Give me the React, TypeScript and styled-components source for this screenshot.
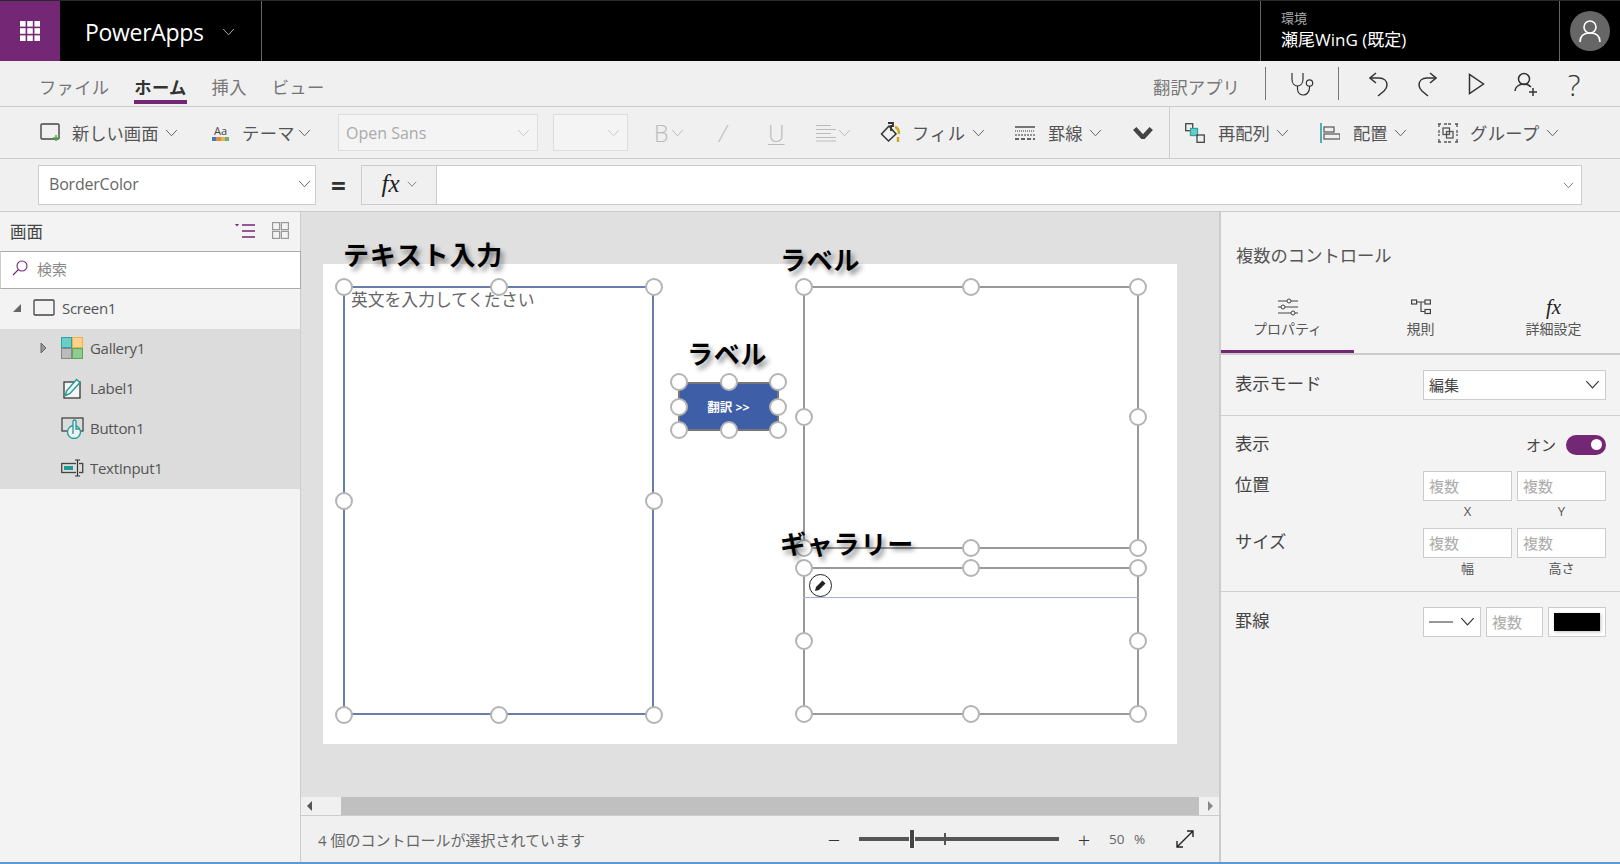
import React from 'react'
import styled, { createGlobalStyle } from 'styled-components'

const FONT = `"Open Sans", "Noto Sans CJK JP", sans-serif`
const PURPLE = '#742774'

const GlobalStyle = createGlobalStyle`
   html, body {
      margin: 0;
      padding: 0;
      background: #f0f0f0;
   }
   * {
      box-sizing: border-box;
   }
`

const Page = styled.div`
   width: 1620px;
   height: 864px;
   display: flex;
   flex-direction: column;
   overflow: hidden;
   font-family: ${FONT};
   color: #444;
   background: #f0f0f0;
   border-bottom: 2px solid #5b9bd5;
`

/* ---- top bar ---- */
const TopBar = styled.header`
   height: 61px;
   flex: none;
   display: flex;
   align-items: stretch;
   background: #000;
   border-top: 1px solid #2a2a2a;
   color: #fff;
`
const Waffle = styled.div`
   width: 60px;
   background: ${PURPLE};
   display: flex;
   align-items: center;
   justify-content: center;
`
const Brand = styled.div`
   width: 202px;
   display: flex;
   align-items: center;
   gap: 18px;
   padding: 2px 0 0 25px;
   font-size: 23px;
   letter-spacing: -0.3px;
   border-right: 1px solid #666;
`
const Spacer = styled.div`
   flex: 1;
`
const EnvBox = styled.div`
   width: 300px;
   flex: none;
   padding: 8px 0 0 20px;
   border-left: 1px solid #666;
   border-right: 1px solid #666;
   display: flex;
   flex-direction: column;
`
const EnvLabel = styled.span`
   font-size: 13px;
   line-height: 18px;
   color: #aaa;
`
const EnvName = styled.span`
   font-size: 17px;
   line-height: 26px;
`
const AvatarBox = styled.div`
   width: 60px;
   flex: none;
   display: flex;
   align-items: center;
   justify-content: center;
`
const Avatar = styled.div`
   width: 40px;
   height: 40px;
   border-radius: 50%;
   background: #666;
   display: flex;
   align-items: center;
   justify-content: center;
`

/* ---- menu ---- */
const MenuBar = styled.nav`
   height: 46px;
   flex: none;
   display: flex;
   align-items: flex-start;
   padding: 0 0 0 39px;
   border-bottom: 1px solid #ccc;
`
const MenuTab = styled.span<{ $active?: boolean }>`
   margin-right: 25px;
   height: 43px;
   padding-top: 14px;
   font-size: 17.3px;
   line-height: 26px;
   letter-spacing: 0.3px;
   color: ${(p) => (p.$active ? '#333' : '#777')};
   font-weight: ${(p) => (p.$active ? 700 : 400)};
   border-bottom: ${(p) => (p.$active ? `4px solid ${PURPLE}` : 'none')};
`
const MenuTools = styled.div`
   margin-left: auto;
   height: 46px;
   display: flex;
   align-items: center;
   padding-right: 22px;
`
const AppName = styled.span`
   font-size: 17.3px;
   letter-spacing: 0.1px;
   color: #777;
   margin-right: 25px;
   padding-top: 5px;
`
const ToolDivider = styled.span`
   width: 1px;
   height: 33px;
   background: #777;
   margin-top: -1px;
`
const ToolSlot = styled.span<{ $w: number }>`
   width: ${(p) => p.$w}px;
   display: flex;
   align-items: center;
   justify-content: center;
   font-size: 30px;
   font-weight: 300;
   line-height: 33px;
   color: #333;
`

/* ---- ribbon ---- */
const Ribbon = styled.div`
   height: 52px;
   flex: none;
   display: flex;
   align-items: center;
   padding-left: 40px;
   border-bottom: 1px solid #ccc;
`
const RibbonItem = styled.div<{ $w: number; $gap?: number; $pl?: number }>`
   width: ${(p) => p.$w}px;
   flex: none;
   display: flex;
   align-items: center;
   gap: ${(p) => p.$gap ?? 12}px;
   padding-left: ${(p) => p.$pl ?? 0}px;
   font-size: 17.3px;
   color: #555;
`
const ItemText = styled.span<{ $mr?: number; $ls?: number }>`
   margin-right: ${(p) => p.$mr ?? -7}px;
   letter-spacing: ${(p) => p.$ls ?? 0}px;
   white-space: nowrap;
`
const ThemeIcon = styled.span`
   width: 17px;
   flex: none;
   display: flex;
   flex-direction: column;
   align-items: center;
   font-size: 11px;
   line-height: 12px;
   color: #444;
`
const ThemeSwatches = styled.span`
   width: 17px;
   height: 4px;
   background: linear-gradient(90deg, #3b7dc4 25%, #e8883a 25% 50%, #e2b84c 50% 75%, #6fb07a 75%);
`
const RibbonSelect = styled.div<{ $w: number; $ml: number }>`
   width: ${(p) => p.$w}px;
   height: 37px;
   flex: none;
   margin-left: ${(p) => p.$ml}px;
   display: flex;
   align-items: center;
   justify-content: space-between;
   padding: 0 7px;
   border: 1px solid #ddd;
   background: #f4f4f4;
   color: #aaa;
   font-size: 16px;
`
const RibbonDivider = styled.span`
   width: 1px;
   height: 51px;
   margin-top: -1px;
   background: #ccc;
   flex: none;
`
const GhostLetter = styled.span<{ $italic?: boolean; $underline?: boolean }>`
   font-size: 23px;
   line-height: 26px;
   color: #bbb;
   font-weight: 300;
   font-style: ${(p) => (p.$italic ? 'italic' : 'normal')};
   text-decoration: ${(p) => (p.$underline ? 'underline' : 'none')};
   text-underline-offset: 2px;
   text-decoration-thickness: 1px;
`

/* ---- formula bar ---- */
const FormulaBar = styled.div`
   height: 53px;
   flex: none;
   display: flex;
   align-items: flex-start;
   padding: 6px 38px 0 38px;
   border-bottom: 1px solid #ccc;
`
const PropSelect = styled.div`
   width: 278px;
   height: 40px;
   display: flex;
   align-items: center;
   justify-content: space-between;
   padding: 0 4px 2px 10px;
   background: #fff;
   border: 1px solid #ccc;
   font-size: 16px;
   letter-spacing: -0.2px;
   color: #666;
`
const EqualSign = styled.span`
   width: 45px;
   text-align: center;
   font-size: 26px;
   line-height: 42px;
   font-weight: 700;
   color: #333;
`
const FxBox = styled.div`
   width: 76px;
   height: 40px;
   display: flex;
   align-items: center;
   justify-content: center;
   gap: 7px;
   padding-bottom: 3px;
   border: 1px solid #ccc;
   background: #f0f0f0;
`
const FxGlyph = styled.span<{ $size?: number }>`
   font-family: "Liberation Serif", serif;
   font-style: italic;
   font-size: ${(p) => p.$size ?? 25}px;
   line-height: 1;
   color: #222;
`
const FormulaInput = styled.div`
   flex: 1;
   height: 40px;
   display: flex;
   align-items: center;
   justify-content: flex-end;
   padding-right: 7px;
   background: #fff;
   border: 1px solid #ccc;
   border-left: none;
`

/* ---- main area ---- */
const Main = styled.div`
   flex: 1;
   min-height: 0;
   display: flex;
`
const LeftPanel = styled.aside`
   width: 301px;
   flex: none;
   background: #f3f3f3;
   border-right: 1px solid #ccc;
`
const PanelHead = styled.div`
   height: 39px;
   display: flex;
   align-items: center;
   padding: 0 11px 2px 10px;
   font-size: 16.5px;
   color: #444;
`
const HeadIcons = styled.div`
   margin-left: auto;
   display: flex;
   align-items: center;
   gap: 17px;
`
const SearchBox = styled.div`
   height: 38px;
   margin-right: -1px;
   display: flex;
   align-items: center;
   gap: 9px;
   padding: 0 0 4px 11px;
   background: #fff;
   border: 1px solid #aaa;
   border-left-color: #ccc;
   font-size: 15px;
   color: #888;
   position: relative;
`
const TreeRow = styled.div<{ $selected?: boolean; $indent: number }>`
   height: 40px;
   display: flex;
   align-items: center;
   padding: 0 0 2px ${(p) => p.$indent}px;
   background: ${(p) => (p.$selected ? '#dcdcdc' : 'transparent')};
   font-size: 15px;
   letter-spacing: -0.3px;
   color: #555;
`
const TreeCaret = styled.span`
   width: 21px;
   flex: none;
   display: flex;
`
const TreeIcon = styled.span`
   width: 29px;
   flex: none;
   display: flex;
`

const CanvasColumn = styled.div`
   flex: 1;
   min-width: 0;
   display: flex;
   flex-direction: column;
`
const CanvasArea = styled.div`
   flex: 1;
   min-height: 0;
   background: #e0e0e0;
   padding: 52px 0 0 22px;
`
const Artboard = styled.div`
   position: relative;
   width: 854px;
   height: 480px;
   background: #fff;
`
const ScrollBar = styled.div`
   height: 19px;
   flex: none;
   display: flex;
   align-items: center;
   padding: 0 6px;
   background: #f0f0f0;
   border-bottom: 1px solid #ccc;
`
const ScrollThumb = styled.div`
   width: 858px;
   height: 18px;
   margin: 0 auto 0 29px;
   background: #c0c0c0;
`
const StatusBar = styled.div`
   height: 46px;
   flex: none;
   display: flex;
   align-items: center;
   padding: 0 22px 0 17px;
   font-size: 15px;
   color: #666;
`
const StatusText = styled.span`
   width: 504px;
   flex: none;
`
const ZoomSign = styled.span<{ $side: 'left' | 'right' }>`
   width: 24px;
   flex: none;
   margin-${(p) => (p.$side === 'left' ? 'right' : 'left')}: 13px;
   text-align: center;
   font-size: 22px;
   font-weight: 300;
   line-height: 24px;
   color: #333;
`
const ZoomTrack = styled.div`
   position: relative;
   width: 200px;
   height: 4px;
   flex: none;
   background: #555;
`
const ZoomThumb = styled.span`
   position: absolute;
   left: 50px;
   top: -7px;
   width: 4px;
   height: 18px;
   background: #444;
   border: 1px solid #fff;
   border-width: 0 1px;
   box-sizing: content-box;
`
const ZoomTick = styled.span`
   position: absolute;
   left: 85px;
   top: -4px;
   width: 2px;
   height: 12px;
   background: #555;
`
const ZoomValue = styled.span`
   margin-left: 13px;
   width: 66px;
   flex: none;
   word-spacing: 6px;
   font-size: 13.5px;
`

/* ---- free canvas items ---- */
const Frame = styled.div<{ $x: number; $y: number; $w: number; $h: number; $color: string }>`
   position: absolute;
   left: ${(p) => p.$x - 323}px;
   top: ${(p) => p.$y - 264}px;
   width: ${(p) => p.$w}px;
   height: ${(p) => p.$h}px;
   border: 2px solid ${(p) => p.$color};
`
const Handle = styled.span<{ $x: number; $y: number }>`
   position: absolute;
   left: ${(p) => p.$x - 323 - 9}px;
   top: ${(p) => p.$y - 264 - 9}px;
   width: 18px;
   height: 18px;
   border-radius: 50%;
   background: #fff;
   border: 2px solid #b4b4b4;
   z-index: 2;
`
const Placeholder = styled.span`
   position: absolute;
   left: 6px;
   top: 1px;
   font-size: 16.8px;
   line-height: 22px;
   color: #666;
`
const ActionButton = styled.div`
   position: absolute;
   inset: 0;
   display: flex;
   align-items: center;
   justify-content: center;
   padding-bottom: 1px;
   background: #3f5ea8;
   color: #fff;
   font-size: 12.5px;
   font-weight: 700;
`
const Callout = styled.span<{ $x: number; $y: number }>`
   position: absolute;
   left: ${(p) => p.$x - 323}px;
   top: ${(p) => p.$y - 264}px;
   font-size: 26px;
   line-height: 32px;
   font-weight: 700;
   color: #000;
   letter-spacing: 0.8px;
   white-space: nowrap;
   text-shadow: 3px 4px 5px rgba(0, 0, 0, 0.45);
   z-index: 3;
`
const TemplateLine = styled.div`
   position: absolute;
   left: ${803 - 323}px;
   top: ${597 - 264}px;
   width: 336px;
   height: 1px;
   background: #a4b1d2;
`
const EditBadge = styled.span`
   position: absolute;
   left: ${809 - 323}px;
   top: ${574 - 264}px;
   width: 23px;
   height: 23px;
   border-radius: 50%;
   border: 1.5px solid #222;
   background: #fff;
   display: flex;
   align-items: center;
   justify-content: center;
   z-index: 2;
`

/* ---- right panel ---- */
const RightPanel = styled.aside`
   width: 401px;
   flex: none;
   background: #f3f3f3;
   border-left: 2px solid #ccc;
`
const RightTitle = styled.div`
   height: 70px;
   padding: 31px 0 0 15px;
   font-size: 17.3px;
   line-height: 26px;
   color: #555;
`
const TabStrip = styled.div`
   height: 73px;
   display: flex;
   border-bottom: 2px solid #ccc;
`
const PropTab = styled.div<{ $active?: boolean }>`
   width: 133px;
   height: 71px;
   padding-top: 14px;
   display: flex;
   flex-direction: column;
   align-items: center;
   gap: 1px;
   font-size: 14px;
   line-height: 20px;
   color: #555;
   border-bottom: ${(p) => (p.$active ? `3px solid ${PURPLE}` : 'none')};
`
const TabIcon = styled.span`
   height: 22px;
   display: flex;
   align-items: center;
`
const Section = styled.section<{ $h: number; $pt: number }>`
   height: ${(p) => p.$h}px;
   padding: ${(p) => p.$pt}px 14px 0 14px;
   border-bottom: 1px solid #d0d0d0;
   &:last-child {
      border-bottom: none;
   }
`
const PropRow = styled.div<{ $h?: number }>`
   height: ${(p) => (p.$h ? `${p.$h}px` : 'auto')};
   display: flex;
   align-items: flex-start;
   justify-content: space-between;
`
const PropLabel = styled.span`
   font-size: 17.3px;
   line-height: 28px;
   color: #444;
`
const Fields = styled.div`
   width: 183px;
   display: flex;
   gap: 5px;
`
const FieldBox = styled.div<{ $w?: number }>`
   width: ${(p) => (p.$w ? `${p.$w}px` : 'auto')};
   flex: ${(p) => (p.$w ? 'none' : '1')};
   height: 30px;
   display: flex;
   align-items: center;
   justify-content: space-between;
   padding: 0 5px 1px;
   background: #fff;
   border: 1px solid #ccc;
   font-size: 15px;
   color: #aaa;
`
const FieldValue = styled.span`
   color: #444;
`
const FieldCaption = styled.span`
   flex: 1;
   text-align: center;
   font-size: 13px;
   line-height: 21px;
   color: #555;
`
const ToggleWrap = styled.div`
   display: flex;
   align-items: center;
   gap: 10px;
   margin-top: 4px;
   font-size: 15px;
   color: #444;
`
const Toggle = styled.span`
   width: 40px;
   height: 20px;
   padding-right: 4px;
   border-radius: 10px;
   background: ${PURPLE};
   display: flex;
   align-items: center;
   justify-content: flex-end;
   &::after {
      content: '';
      width: 11px;
      height: 11px;
      border-radius: 50%;
      background: #fff;
   }
`
const Swatch = styled.span`
   flex: 1;
   height: 18px;
   background: #000;
   box-shadow: 1px 1px 3px rgba(0, 0, 0, 0.25);
`

/* ---- icons ---- */
const Chevron: React.FC<{ size?: number; color?: string; width?: number }> = ({
   size = 13,
   color = '#666',
   width = 1,
}) => (
   <svg width={size} height={size * 0.6} viewBox="0 0 13 8" fill="none">
      <path d="M1 1l5.500 6L12 1" stroke={color} strokeWidth={width} />
   </svg>
)

const WaffleIcon = () => (
   <svg width="20" height="20" viewBox="0 0 20 20" fill="#fff">
      {[0, 7.2, 14.4].map((y) =>
         [0, 7.2, 14.4].map((x) => <rect key={`${x}-${y}`} x={x} y={y} width="5.6" height="5.6" />),
      )}
   </svg>
)

const App: React.FC = () => {
   const textHandles = [
      [344, 287], [499, 287], [654, 287], [344, 501], [654, 501], [344, 715], [499, 715], [654, 715],
   ]
   const buttonHandles = [
      [679, 382], [729, 382], [778, 382], [679, 407], [778, 407], [679, 430], [729, 430], [778, 430],
   ]
   const labelHandles = [
      [804, 287], [971, 287], [1138, 287], [804, 417], [1138, 417], [804, 548], [971, 548], [1138, 548],
   ]
   const galleryHandles = [
      [804, 568], [971, 568], [1138, 568], [804, 641], [1138, 641], [804, 714], [971, 714], [1138, 714],
   ]
   return (
      <Page>
         <GlobalStyle />
         <TopBar>
            <Waffle>
               <WaffleIcon />
            </Waffle>
            <Brand>
               PowerApps
               <Chevron size={13} color="#aaa" />
            </Brand>
            <Spacer />
            <EnvBox>
               <EnvLabel>環境</EnvLabel>
               <EnvName>瀬尾WinG (既定)</EnvName>
            </EnvBox>
            <AvatarBox>
               <Avatar>
                  <svg width="24" height="24" viewBox="0 0 24 24" fill="none" stroke="#fff" strokeWidth="1.6">
                     <circle cx="12" cy="8" r="6" />
                     <path d="M2 23c0-6 4-9 10-9s10 3 10 9" />
                  </svg>
               </Avatar>
            </AvatarBox>
         </TopBar>

         <MenuBar>
            <MenuTab>ファイル</MenuTab>
            <MenuTab $active>ホーム</MenuTab>
            <MenuTab>挿入</MenuTab>
            <MenuTab>ビュー</MenuTab>
            <MenuTools>
               <AppName>翻訳アプリ</AppName>
               <ToolDivider />
               <ToolSlot $w={72}>
                  <svg width="23" height="24" viewBox="0 0 23 24" fill="none" stroke="#333" strokeWidth="1.2">
                     <path d="M1 1v6c0 5 3 7 5.500 7S12 12 12 7V1" />
                     <path d="M6.500 14v3c0 4 3 6 6 6s6-3 6-7v-2" />
                     <circle cx="18.500" cy="11" r="3.200" />
                  </svg>
               </ToolSlot>
               <ToolDivider />
               <ToolSlot $w={16} />
               <ToolSlot $w={48}>
                  <svg width="20" height="25" viewBox="0 0 20 25" fill="none" stroke="#333" strokeWidth="1.5">
                     <path d="M7 1L1 6l6 5" />
                     <path d="M1 6h9c5 0 8 3 8 7 0 2-1 4-3 6l-6 5" />
                  </svg>
               </ToolSlot>
               <ToolSlot $w={48}>
                  <svg width="20" height="25" viewBox="0 0 20 25" fill="none" stroke="#333" strokeWidth="1.5">
                     <path d="M13 1l6 5-6 5" />
                     <path d="M19 6h-9c-5 0-8 3-8 7 0 2 1 4 3 6l6 5" />
                  </svg>
               </ToolSlot>
               <ToolSlot $w={50}>
                  <svg width="17" height="22" viewBox="0 0 17 22" fill="none" stroke="#333" strokeWidth="1.5">
                     <path d="M1.500 1.500v19L15.500 11z" />
                  </svg>
               </ToolSlot>
               <ToolSlot $w={49}>
                  <svg width="24" height="25" viewBox="0 0 24 25" fill="none" stroke="#333" strokeWidth="1.5">
                     <circle cx="10" cy="7" r="5.500" />
                     <path d="M1 19c0-4 4-7 9-7 3 0 5 1 7 3" />
                     <path d="M19 16v8M15 20h8" />
                  </svg>
               </ToolSlot>
               <ToolSlot $w={48}>?</ToolSlot>
            </MenuTools>
         </MenuBar>

         <Ribbon>
            <RibbonItem $w={172}>
               <svg width="20" height="19" viewBox="0 0 20 19" fill="none">
                  <rect x="1" y="1" width="18" height="15" rx="1" stroke="#444" strokeWidth="1.4" />
                  <path d="M16 12v6M13 15h6" stroke="#4aa84a" strokeWidth="1.5" />
               </svg>
               <ItemText $mr={-5}>新しい画面</ItemText>
               <Chevron />
            </RibbonItem>
            <RibbonItem $w={126} $gap={13}>
               <ThemeIcon>
                  Aa
                  <ThemeSwatches />
               </ThemeIcon>
               <ItemText $mr={-10} $ls={0.4}>テーマ</ItemText>
               <Chevron />
            </RibbonItem>
            <RibbonSelect $w={200} $ml={0}>
               Open Sans
               <Chevron color="#ccc" />
            </RibbonSelect>
            <RibbonSelect $w={75} $ml={15}>
               <span />
               <Chevron color="#ccc" />
            </RibbonSelect>
            <RibbonItem $w={85} $pl={26} $gap={3}>
               <GhostLetter>B</GhostLetter>
               <Chevron color="#bbb" />
            </RibbonItem>
            <RibbonItem $w={55} $pl={6}>
               <GhostLetter $italic>/</GhostLetter>
            </RibbonItem>
            <RibbonItem $w={48}>
               <GhostLetter $underline>U</GhostLetter>
            </RibbonItem>
            <RibbonItem $w={64} $gap={2}>
               <svg width="20" height="18" viewBox="0 0 20 18" stroke="#bbb" strokeWidth="1">
                  <path d="M0 1.500h15M0 5.500h20M0 9.500h15M0 13.500h20M0 17h20" />
               </svg>
               <Chevron color="#bbb" />
            </RibbonItem>
            <RibbonItem $w={135} $gap={11}>
               <svg width="21" height="22" viewBox="0 0 21 22" fill="none">
                  <path d="M9 4L1.500 12l7 7L16 12z" stroke="#333" strokeWidth="1.500" />
                  <path d="M8 1h5v3l-2 0v5" stroke="#333" strokeWidth="1.800" />
                  <path d="M15 5c3 1 4 3 4 7M18 15v5" stroke="#d4a41c" strokeWidth="2.400" />
               </svg>
               <ItemText $mr={-5} $ls={0.8}>フィル</ItemText>
               <Chevron />
            </RibbonItem>
            <RibbonItem $w={110} $gap={13}>
               <svg width="20" height="14" viewBox="0 0 20 14" stroke="#333" strokeWidth="1" fill="none">
                  <path d="M0 1h20" strokeWidth="1.300" />
                  <path d="M0 5h20" strokeDasharray="1 1" />
                  <path d="M0 9h20" strokeDasharray="2 1" />
                  <path d="M0 13h20" strokeDasharray="4 2" strokeWidth="1.300" />
               </svg>
               <ItemText>罫線</ItemText>
               <Chevron />
            </RibbonItem>
            <RibbonItem $w={44} $pl={8}>
               <Chevron size={20} color="#444" width={3} />
            </RibbonItem>
            <RibbonDivider />
            <RibbonItem $w={150} $pl={15} $gap={13}>
               <svg width="20" height="20" viewBox="0 0 20 20" fill="none" stroke="#444" strokeWidth="1.300">
                  <rect x="0.700" y="0.700" width="7" height="7" />
                  <rect x="5.500" y="5.500" width="7" height="7" fill="#6ccdc8" stroke="#2aa5a0" />
                  <rect x="12" y="12" width="7.300" height="7.300" />
               </svg>
               <ItemText>再配列</ItemText>
               <Chevron />
            </RibbonItem>
            <RibbonItem $w={118} $gap={13}>
               <svg width="20" height="20" viewBox="0 0 20 20" fill="none" stroke="#555" strokeWidth="1.200">
                  <path d="M1 0v20" stroke="#1c9a96" strokeWidth="1.500" />
                  <rect x="4" y="4" width="10" height="5" />
                  <rect x="4" y="11" width="16" height="5" />
               </svg>
               <ItemText>配置</ItemText>
               <Chevron />
            </RibbonItem>
            <RibbonItem $w={130} $gap={12}>
               <svg width="20" height="20" viewBox="0 0 20 20" fill="none" stroke="#555" strokeWidth="1.300">
                  <path d="M0 1h3M0 19h3M17 1h3M17 19h3M1 1v3M1 16v3M19 1v3M19 16v3" />
                  <path d="M6 1h8M6 19h8M1 7v6M19 7v6" strokeDasharray="3 1" />
                  <rect x="5" y="5" width="6.500" height="6.500" />
                  <rect x="8.500" y="8.500" width="6.500" height="6.500" />
               </svg>
               <ItemText $mr={-6} $ls={0.4}>グループ</ItemText>
               <Chevron />
            </RibbonItem>
         </Ribbon>

         <FormulaBar>
            <PropSelect>
               BorderColor
               <Chevron />
            </PropSelect>
            <EqualSign>=</EqualSign>
            <FxBox>
               <FxGlyph>fx</FxGlyph>
               <Chevron size={10} />
            </FxBox>
            <FormulaInput>
               <Chevron size={11} />
            </FormulaInput>
         </FormulaBar>

         <Main>
            <LeftPanel>
               <PanelHead>
                  画面
                  <HeadIcons>
                     <svg width="20" height="16" viewBox="0 0 20 16" fill="none" stroke={PURPLE} strokeWidth="1.300">
                        <path d="M0 1h4l-2 2.500z" fill={PURPLE} stroke="none" />
                        <path d="M7 2h13M7 8h13M7 14h13" />
                     </svg>
                     <svg width="17" height="17" viewBox="0 0 17 17" fill="none" stroke="#999" strokeWidth="1.200">
                        <rect x="0.600" y="0.600" width="7" height="7" />
                        <rect x="9.400" y="0.600" width="7" height="7" />
                        <rect x="0.600" y="9.400" width="7" height="7" />
                        <rect x="9.400" y="9.400" width="7" height="7" />
                     </svg>
                  </HeadIcons>
               </PanelHead>
               <SearchBox>
                  <svg width="16" height="16" viewBox="0 0 16 16" fill="none" stroke={PURPLE} strokeWidth="1.100">
                     <circle cx="10" cy="6" r="5" />
                     <path d="M6.500 9.500L1 15" />
                  </svg>
                  検索
               </SearchBox>
               <TreeRow $indent={12}>
                  <TreeCaret>
                     <svg width="10" height="10" viewBox="0 0 10 10">
                        <path d="M9 1v8H1z" fill="#666" />
                     </svg>
                  </TreeCaret>
                  <TreeIcon>
                     <svg width="22" height="18" viewBox="0 0 22 18" fill="none">
                        <rect x="1" y="1" width="20" height="15" rx="1" stroke="#444" strokeWidth="1.300" />
                     </svg>
                  </TreeIcon>
                  Screen1
               </TreeRow>
               <TreeRow $selected $indent={40}>
                  <TreeCaret>
                     <svg width="7" height="12" viewBox="0 0 7 12" fill="#999" stroke="#666">
                        <path d="M1 1l5 5-5 5z" />
                     </svg>
                  </TreeCaret>
                  <TreeIcon>
                     <svg width="22" height="22" viewBox="0 0 22 22">
                        <rect x="0.500" y="0.500" width="10" height="10" fill="#6ccdc8" stroke="#2aa5a0" />
                        <rect x="11.500" y="0.500" width="10" height="10" fill="#fbd28a" stroke="#f2b04a" />
                        <rect x="0.500" y="11.500" width="10" height="10" fill="#bbb" stroke="#888" />
                        <rect x="11.500" y="11.500" width="10" height="10" fill="#8fcc8f" stroke="#5aa85a" />
                     </svg>
                  </TreeIcon>
                  Gallery1
               </TreeRow>
               <TreeRow $selected $indent={61}>
                  <TreeIcon>
                     <svg width="21" height="21" viewBox="0 0 21 21" fill="none">
                        <rect x="3" y="4" width="16" height="16" fill="#f4f4f4" stroke="#444" strokeWidth="1.400" />
                        <path d="M4.500 17.500l1-4.500L15.500 1.500l3.500 3L9 15.500z" fill="#f4f4f4" stroke="#1c9a96" strokeWidth="1.400" />
                     </svg>
                  </TreeIcon>
                  Label1
               </TreeRow>
               <TreeRow $selected $indent={61}>
                  <TreeIcon>
                     <svg width="24" height="22" viewBox="0 0 24 22" fill="none">
                        <rect x="1" y="1" width="21" height="13" stroke="#444" strokeWidth="1.300" />
                        <circle cx="13" cy="15" r="6.500" fill="#f0f0f0" stroke="#1c9a96" strokeWidth="1.300" />
                        <path d="M12 17V4.500a1.500 1.500 0 0 1 3 0V12h4" fill="#f0f0f0" stroke="#1c9a96" strokeWidth="1.300" />
                     </svg>
                  </TreeIcon>
                  Button1
               </TreeRow>
               <TreeRow $selected $indent={61}>
                  <TreeIcon>
                     <svg width="24" height="18" viewBox="0 0 24 18" fill="none">
                        <rect x="0.700" y="4.500" width="21" height="9" stroke="#444" strokeWidth="1.300" />
                        <rect x="3" y="7" width="9" height="4" fill="#1c9a96" />
                        <rect x="15" y="0" width="3" height="18" fill="#dcdcdc" />
                        <path d="M14 1h5M14 17h5M16.500 1v16" stroke="#333" strokeWidth="1.200" />
                     </svg>
                  </TreeIcon>
                  TextInput1
               </TreeRow>
            </LeftPanel>

            <CanvasColumn>
               <CanvasArea>
                  <Artboard>
                     <Frame $x={343} $y={286} $w={311} $h={429} $color="#6a7cab">
                        <Placeholder>英文を入力してください</Placeholder>
                     </Frame>
                     <Frame $x={678} $y={382} $w={101} $h={49} $color="#777">
                        <ActionButton>翻訳 &gt;&gt;</ActionButton>
                     </Frame>
                     <Frame $x={803} $y={286} $w={336} $h={263} $color="#999" />
                     <Frame $x={803} $y={567} $w={336} $h={148} $color="#999" />
                     <TemplateLine />
                     <EditBadge>
                        <svg width="13" height="13" viewBox="0 0 13 13">
                           <path d="M1 12l1-4 6.500-6.500 3 3L5 11z" fill="#222" />
                        </svg>
                     </EditBadge>
                     {textHandles.map(([x, y]) => (
                        <Handle key={`t${x}-${y}`} $x={x} $y={y} />
                     ))}
                     {buttonHandles.map(([x, y]) => (
                        <Handle key={`b${x}-${y}`} $x={x} $y={y} />
                     ))}
                     {labelHandles.map(([x, y]) => (
                        <Handle key={`l${x}-${y}`} $x={x} $y={y} />
                     ))}
                     {galleryHandles.map(([x, y]) => (
                        <Handle key={`g${x}-${y}`} $x={x} $y={y} />
                     ))}
                     <Callout $x={343} $y={239}>テキスト入力</Callout>
                     <Callout $x={780} $y={244}>ラベル</Callout>
                     <Callout $x={687} $y={338}>ラベル</Callout>
                     <Callout $x={780} $y={528}>ギャラリー</Callout>
                  </Artboard>
               </CanvasArea>
               <ScrollBar>
                  <svg width="5" height="10" viewBox="0 0 5 10">
                     <path d="M5 0v10L0 5z" fill="#555" />
                  </svg>
                  <ScrollThumb />
                  <svg width="5" height="10" viewBox="0 0 5 10">
                     <path d="M0 0v10l5-5z" fill="#888" />
                  </svg>
               </ScrollBar>
               <StatusBar>
                  <StatusText>4 個のコントロールが選択されています</StatusText>
                  <ZoomSign $side="left">−</ZoomSign>
                  <ZoomTrack>
                     <ZoomThumb />
                     <ZoomTick />
                  </ZoomTrack>
                  <ZoomSign $side="right">+</ZoomSign>
                  <ZoomValue>50 %</ZoomValue>
                  <svg width="20" height="20" viewBox="0 0 20 20" fill="none" stroke="#222" strokeWidth="1.400">
                     <path d="M2 18L18 2M12 2h6v6M2 12v6h6" />
                  </svg>
               </StatusBar>
            </CanvasColumn>

            <RightPanel>
               <RightTitle>複数のコントロール</RightTitle>
               <TabStrip>
                  <PropTab $active>
                     <TabIcon>
                        <svg width="20" height="18" viewBox="0 0 20 18" fill="none" stroke="#444" strokeWidth="1">
                           <path d="M0 3h9M13 3h7M0 9h3M7 9h13M0 15h13M17 15h3" />
                           <circle cx="11" cy="3" r="2" />
                           <circle cx="5" cy="9" r="2" />
                           <circle cx="15" cy="15" r="2" />
                        </svg>
                     </TabIcon>
                     プロパティ
                  </PropTab>
                  <PropTab>
                     <TabIcon>
                        <svg width="20" height="16" viewBox="0 0 20 16" fill="none" stroke="#444" strokeWidth="1.200">
                           <rect x="0.600" y="1" width="5" height="4" />
                           <rect x="14" y="1" width="5.400" height="4" />
                           <rect x="14" y="10.500" width="5.400" height="4" />
                           <path d="M5.600 3H14M10 3v9.500h4" />
                        </svg>
                     </TabIcon>
                     規則
                  </PropTab>
                  <PropTab>
                     <TabIcon>
                        <FxGlyph $size={21}>fx</FxGlyph>
                     </TabIcon>
                     詳細設定
                  </PropTab>
               </TabStrip>
               <Section $h={61} $pt={15}>
                  <PropRow>
                     <PropLabel>表示モード</PropLabel>
                     <Fields>
                        <FieldBox>
                           <FieldValue>編集</FieldValue>
                           <Chevron size={15} color="#333" />
                        </FieldBox>
                     </Fields>
                  </PropRow>
               </Section>
               <Section $h={176} $pt={14}>
                  <PropRow $h={41}>
                     <PropLabel>表示</PropLabel>
                     <ToggleWrap>
                        オン
                        <Toggle />
                     </ToggleWrap>
                  </PropRow>
                  <PropRow>
                     <PropLabel>位置</PropLabel>
                     <Fields>
                        <FieldBox>複数</FieldBox>
                        <FieldBox>複数</FieldBox>
                     </Fields>
                  </PropRow>
                  <PropRow $h={27}>
                     <span />
                     <Fields>
                        <FieldCaption>X</FieldCaption>
                        <FieldCaption>Y</FieldCaption>
                     </Fields>
                  </PropRow>
                  <PropRow>
                     <PropLabel>サイズ</PropLabel>
                     <Fields>
                        <FieldBox>複数</FieldBox>
                        <FieldBox>複数</FieldBox>
                     </Fields>
                  </PropRow>
                  <PropRow>
                     <span />
                     <Fields>
                        <FieldCaption>幅</FieldCaption>
                        <FieldCaption>高さ</FieldCaption>
                     </Fields>
                  </PropRow>
               </Section>
               <Section $h={60} $pt={15}>
                  <PropRow>
                     <PropLabel>罫線</PropLabel>
                     <Fields>
                        <FieldBox $w={58}>
                           <svg width="24" height="2" viewBox="0 0 24 2">
                              <path d="M0 1h24" stroke="#333" />
                           </svg>
                           <Chevron size={15} color="#333" />
                        </FieldBox>
                        <FieldBox $w={57}>複数</FieldBox>
                        <FieldBox $w={58}>
                           <Swatch />
                        </FieldBox>
                     </Fields>
                  </PropRow>
               </Section>
            </RightPanel>
         </Main>
      </Page>
   )
}

export default App
